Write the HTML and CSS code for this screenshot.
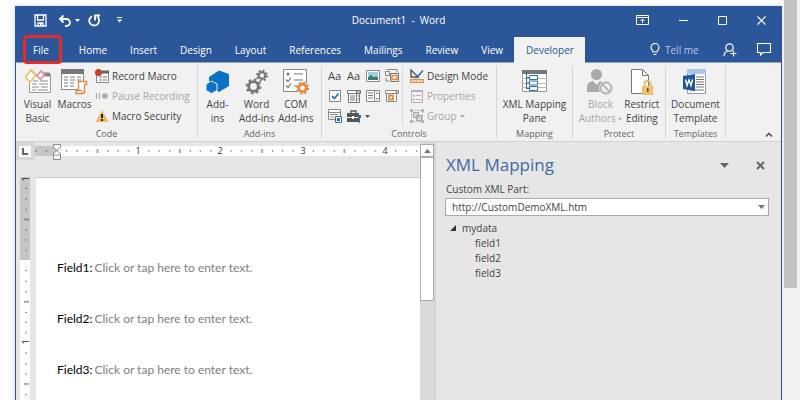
FILE: index.html
```
<!DOCTYPE html>
<html lang="en">
<head>
    <meta charset="UTF-8">
    <meta name="viewport" content="width=device-width, initial-scale=1.0">
    <title>Document1 - Word</title>
    <link rel="stylesheet" href="styles.css">
</head>
<body>
    <div class="window">
        <header class="titlebar">
            <div class="quick">
                <button aria-label="Save"><svg width="13" height="13"><path d="M1 1h11v11H1z M3.500 1v5h6V1 M4 12V9h5v3" fill="none" stroke="#fff" stroke-width="1.300"/><path d="M6 9h1.500v3H6z" fill="#fff"/></svg></button>
                <button class="undo" aria-label="Undo"><svg width="14" height="13"><path d="M2 5h6.500a3.500 3.500 0 0 1 0 7H7M5.500 1.500L2 5l3.500 3.500" fill="none" stroke="#fff" stroke-width="1.800"/></svg><svg width="5" height="3"><path d="M0 0h5L2.500 3z" fill="#fff"/></svg></button>
                <button aria-label="Redo"><svg width="13" height="13"><path d="M4 2.200A4.900 4.900 0 1 0 9.500 3M7 6.500V1.500H12" fill="none" stroke="#fff" stroke-width="1.800"/></svg></button>
                <button class="customize" aria-label="Customize toolbar"><svg width="5" height="6"><path d="M0 0h5v1H0zM0 2.500h5L2.500 5.500z" fill="#fff"/></svg></button>
            </div>
            <h1>Document1&nbsp; - &nbsp;Word</h1>
            <div class="controls">
                <button aria-label="Ribbon options"><svg width="13" height="10"><path d="M.5.5h12v9H.5zM.5 2.500h12M6.500 8V4M4.500 6l2-2 2 2" fill="none" stroke="#fff"/></svg></button>
                <button aria-label="Minimize"><svg width="9" height="9"><path d="M0 4.500h9" stroke="#fff"/></svg></button>
                <button aria-label="Maximize"><svg width="9" height="9"><path d="M.5.5h8v8h-8z" fill="none" stroke="#fff"/></svg></button>
                <button aria-label="Close"><svg width="9" height="9"><path d="M.5.5l8 8M8.500.5l-8 8" stroke="#fff" stroke-width="1.100"/></svg></button>
            </div>
        </header>

        <nav class="tabs">
            <button class="file">File</button>
            <button>Home</button>
            <button>Insert</button>
            <button>Design</button>
            <button>Layout</button>
            <button>References</button>
            <button>Mailings</button>
            <button>Review</button>
            <button>View</button>
            <button class="active">Developer</button>
            <div class="tools">
                <label for="tell" aria-label="Search"><svg width="10" height="13"><path d="M3 9C3 7.500 1 6.500 1 4.400a4 4 0 0 1 8 0C9 6.500 7 7.500 7 9zM3.500 11.500h3" fill="none" stroke="#fff" stroke-width="1.100"/></svg></label>
                <input id="tell" type="text" placeholder="Tell me">
                <button aria-label="Share"><svg width="14" height="14"><circle cx="6.500" cy="4.500" r="3.700" fill="none" stroke="#fff" stroke-width="1.200"/><path d="M1 13c0-3 1.500-4.500 4-5M10.500 7.500v6M7.500 10.500h6" fill="none" stroke="#fff" stroke-width="1.200"/></svg></button>
                <button aria-label="Comments"><svg width="14" height="13"><path d="M.5.5h13v9H6L3.500 12V9.500h-3z" fill="none" stroke="#fff" stroke-width="1.100"/></svg></button>
            </div>
        </nav>

        <section class="ribbon">
            <div class="group code">
                <div class="items">
                    <button class="big">
                        <svg width="26" height="26"><path d="M4.500 5.500h21v18h-21z" fill="#fff" stroke="#999"/><path d="M17 3.500h8v4h-8z" fill="#888"/><path d="M8 12h5M15 12h8M7 15h5M14 15h9M7 18h7M16 18h7M7 21h4M13 21h10" stroke="#888"/><path d="M6 1l5 5-6 7-4.500-5z" fill="#fff" stroke="#e6c06d" stroke-width="1.800"/><path d="M16 2l3.500 3.500-4 5-3.500-3.500z" fill="#fff" stroke="#e297a6" stroke-width="1.800"/></svg>
                        <span>Visual<br>Basic</span>
                    </button>
                    <button class="big">
                        <svg width="27" height="26"><path d="M.5.5h22v20H.5z" fill="#fff" stroke="#8a8a8a"/><path d="M0 0h23v5H0z" fill="#777"/><path d="M3 8h4M9 8h5M16 8h4M3 11h4M9 11h5M16 11h4M3 14h4M9 14h4M3 17h4M9 17h4" stroke="#777"/><path d="M17.500 12.500h8v3h-2v7.500q0 1.500-2 1.500h-6.500v-3h2.500z" fill="#fff" stroke="#e08a45" stroke-width="1.400"/><path d="M17 21.500h4v3" fill="none" stroke="#e08a45"/></svg>
                        <span>Macros</span>
                    </button>
                    <div class="list">
                        <button><svg width="14" height="14"><path d="M1.500 3.500h12v10h-12z" fill="#fff" stroke="#888"/><path d="M7 1.500h7v3H7z" fill="#666"/><path d="M4 8h3M8 8h4M4 11h3M8 11h4" stroke="#777"/><circle cx="3.500" cy="3.500" r="3.500" fill="#c9402c"/></svg>Record Macro</button>
                        <button disabled><svg width="14" height="14"><path d="M1.500 4v6M4.500 4v6" stroke="#aaa" stroke-width="1.200"/><circle cx="10" cy="7" r="2.800" fill="#aaa"/></svg>Pause Recording</button>
                        <button><svg width="14" height="14"><path d="M7 1l6.500 12H.5z" fill="#efb95d"/><path d="M6 5h2v4H6zM6 10h2v2H6z" fill="#222"/></svg>Macro Security</button>
                    </div>
                </div>
                <h2>Code</h2>
            </div>

            <div class="group addins">
                <div class="items">
                    <button class="big">
                        <svg width="26" height="26"><path d="M14 1.500L24 5v12l-10 6-10-6V8z" fill="#0a72c7"/><path d="M6.500 12l5.500 3v6.500l-5.500 3-5.500-3V15z" fill="#0a72c7" stroke="#f1f1f1"/></svg>
                        <span>Add-<br>ins</span>
                    </button>
                    <button class="big">
                        <svg width="26" height="26" fill="none" stroke="#777"><circle cx="9.500" cy="17.500" r="4.800" stroke-width="2.800"/><circle cx="9.500" cy="17.500" r="6.900" stroke-width="2" stroke-dasharray="2.700 2.720"/><circle cx="18" cy="6.500" r="3.300" stroke-width="2.200"/><circle cx="18" cy="6.500" r="5.100" stroke-width="1.800" stroke-dasharray="2 2"/></svg>
                        <span>Word<br>Add-ins</span>
                    </button>
                    <button class="big">
                        <svg width="28" height="26"><path d="M1.500.5h23v22h-23z" fill="#fff" stroke="#888"/><circle cx="6" cy="5" r="1.500" fill="#777"/><path d="M12 5h9M12 11h9M12 17h3M4 10.500l2 2 3-4M4 16.500l2 2 3-4" fill="none" stroke="#777" stroke-width="1.200"/><circle cx="20.500" cy="19" r="6" fill="#f1f1f1"/><circle cx="20.500" cy="19" r="3.700" fill="none" stroke="#e08a45" stroke-width="2.600"/><circle cx="20.500" cy="19" r="5.600" fill="none" stroke="#e08a45" stroke-width="2" stroke-dasharray="2.200 2.200"/></svg>
                        <span>COM<br>Add-ins</span>
                    </button>
                </div>
                <h2>Add-ins</h2>
            </div>

            <div class="group ctrl">
                <div class="items">
                    <div class="palette">
                        <button class="text" aria-label="Rich text">Aa</button>
                        <button class="text" aria-label="Plain text">Aa</button>
                        <button aria-label="Picture"><svg width="14" height="12"><path d="M.5.5h13v11H.5z" fill="#fff" stroke="#888"/><path d="M2 2h10v4H2z" fill="#9fd0e8"/><path d="M2 7l3-2 3 2 2-1 2 1v3H2z" fill="#3b7d70"/></svg></button>
                        <button aria-label="Building block"><svg width="14" height="14"><path d="M1.500.5h9M.5 2.500h4v4h-4zM1 9v3h3M6 .5h6v3" fill="none" stroke="#888"/><path d="M5.500 4.500h8v8h-8z" fill="#fff" stroke="#777"/><path d="M7 6.500h5v4H7z" fill="none" stroke="#e08a45" stroke-width="1.500"/></svg></button>
                        <button aria-label="Check box"><svg width="12" height="12"><path d="M.5.5h11v11H.5z" fill="#fff" stroke="#888"/><path d="M3 6l2.500 2.500L9.500 3.500" fill="none" stroke="#2f6db5" stroke-width="1.800"/></svg></button>
                        <button aria-label="Combo box"><svg width="14" height="13"><path d="M.5.5h13v3H.5zM1.500 3.500h11v9h-11zM9.500.5v12" fill="#fff" stroke="#777"/><path d="M3 6h5M3 8h5M3 10h5M10 2h3M10.500 6h2M10.500 9h2" stroke="#777"/></svg></button>
                        <button aria-label="Drop-down list"><svg width="14" height="12"><path d="M.5.5h13v11H.5zM8.500.5v11" fill="#fff" stroke="#888"/><path d="M2 3h5M2 5.500h5M2 8h5M10 4l1-1.500L12.500 4M10 8l1 1.500L12.500 8" fill="none" stroke="#777"/></svg></button>
                        <button aria-label="Date picker"><svg width="14" height="12"><path d="M.5.5h13v3H.5zM1.500 3.500h10v8h-10z" fill="#fff" stroke="#888"/><path d="M4 5.500h4v4H4z" fill="none" stroke="#e08a45" stroke-width="1.800"/><path d="M10 1.500h3L11.500 3z" fill="#555"/></svg></button>
                        <button aria-label="Repeating section"><svg width="14" height="14"><path d="M.5.5h12v10H.5zM0 3.500h12M2 5.500h8M2 8h4" fill="#fff" stroke="#888"/><path d="M7.500 7.500h6v6h-6z" fill="#fff" stroke="#2f6db5"/><path d="M9 9h3v3H9z" fill="#2f6db5"/></svg></button>
                        <button class="legacy" aria-label="Legacy tools"><svg width="15" height="13"><path d="M4 3V1h5v2" fill="none" stroke="#555" stroke-width="1.300"/><path d="M0 3h12v4H0zM0 8h12v4H0z" fill="#555"/><path d="M5 6h2v3H5z" fill="#fff"/><path d="M11 5h3v3h-1v5h-1V8h-1z" fill="#2f6db5"/></svg><svg width="5" height="3"><path d="M0 0h5L2.500 3z" fill="#555"/></svg></button>
                    </div>
                    <div class="list">
                        <button><svg width="14" height="14"><path d="M1 1v7h7z" fill="none" stroke="#555" stroke-width="1.400"/><path d="M12.500 1L7 7l-2 3 3-1.500L13.500 2z" fill="#2f6db5"/><path d="M.7 10.700h12.600v2.600H.7z" fill="#fff" stroke="#e08a45" stroke-width="1.300"/><path d="M4 11v1.500M7 11v1.500M10 11v1.500" stroke="#e08a45"/></svg>Design Mode</button>
                        <button disabled><svg width="14" height="14"><path d="M1.500 1.500h11v12h-11z" fill="#f7f0f7" stroke="#b8adb8"/><path d="M1 1h12v2H1zM3 6h2v1.500H3zM6 6h5v1H6zM3 10h2v1.500H3zM6 10h5v1H6z" fill="#b8adb8"/></svg>Properties</button>
                        <button disabled><svg width="14" height="14"><path d="M1.500 1.500h11v11h-11z" fill="none" stroke="#b5b5b5" stroke-dasharray="2 1"/><path d="M3.500 3.500h5v5h-5zM6.500 6.500h5v5h-5z" fill="#ddd6dd" stroke="#a9a0a9"/><path d="M0 0h3v3H0zM11 0h3v3h-3zM0 11h3v3H0zM11 11h3v3h-3z" fill="#b5b5b5"/></svg>Group<svg width="5" height="3"><path d="M0 0h5L2.500 3z" fill="#aaa"/></svg></button>
                    </div>
                </div>
                <h2>Controls</h2>
            </div>

            <div class="group mapping">
                <div class="items">
                    <button class="big">
                        <svg width="25" height="26"><path d="M.5 1.500h24v21H.5z" fill="#fff" stroke="#999"/><path d="M0 1h25v4H0z" fill="#777"/><path d="M0 9.500h25M0 14.500h25M0 18.500h25" stroke="#bbb"/><path d="M4.500 3v17M4.500 8.500h3M4.500 14h3M4.500 19.500h3" fill="none" stroke="#2f6db5"/><path d="M7.500 6.500h8v4h-8zM7.500 12h8v4h-8zM7.500 17.500h8v4h-8z" fill="#fff" stroke="#2f6db5"/></svg>
                        <span>XML Mapping<br>Pane</span>
                    </button>
                </div>
                <h2>Mapping</h2>
            </div>

            <div class="group protect">
                <div class="items">
                    <button class="big" disabled>
                        <svg width="26" height="26"><circle cx="9.500" cy="5.500" r="5.500" fill="#aaa"/><path d="M0 23V18q0-5 6-6l3.500 4 3.500-4q5 1 5 6v5z" fill="#aaa"/><circle cx="19" cy="19" r="7" fill="#f1f1f1"/><circle cx="19" cy="19" r="5.500" fill="none" stroke="#b5b5b5" stroke-width="2"/><path d="M15 15l8 8" stroke="#b5b5b5" stroke-width="2"/></svg>
                        <span>Block<br>Authors <svg class="drop" width="4" height="3"><path d="M0 0h4L2 2.500z" fill="#aaa"/></svg></span>
                    </button>
                    <button class="big">
                        <svg width="24" height="26"><path d="M1.500.5h11l6 6v18h-17z" fill="#fff" stroke="#777"/><path d="M12.500.5v6h6" fill="none" stroke="#777"/><path d="M14.500 18v-3a3 3 0 0 1 6 0v3" fill="none" stroke="#eab765" stroke-width="1.800"/><path d="M12 17h11v9H12z" fill="#efc16f"/><path d="M17 19h1.500v4H17z" fill="#555"/></svg>
                        <span>Restrict<br>Editing</span>
                    </button>
                </div>
                <h2>Protect</h2>
            </div>

            <div class="group templates">
                <div class="items">
                    <button class="big">
                        <svg width="24" height="26"><path d="M4.500.5h18v24h-18z" fill="#fff" stroke="#8d9db5"/><path d="M4 0h19v5H4z" fill="#a9c6ea"/><path d="M13 8h8M13 10.500h8M13 13h8M13 15.500h8M13 18h8M7 21h14" stroke="#777"/><path d="M0 7l12-2v17L0 20z" fill="#1f559f"/><path d="M2.500 10.500l1.500 6 2-5.500 2 5.500 1.500-6" fill="none" stroke="#fff" stroke-width="1.400"/></svg>
                        <span>Document<br>Template</span>
                    </button>
                </div>
                <h2>Templates</h2>
            </div>
            <button class="collapse" aria-label="Collapse ribbon"><svg width="8" height="5"><path d="M1 4.500l3-3 3 3" fill="none" stroke="#555" stroke-width="1.600"/></svg></button>
        </section>

        <main class="work">
            <section class="editor">
                <div class="hruler">
                    <button class="tabstop" aria-label="Tab stop"><svg width="7" height="7"><path d="M1 0v6h5" fill="none" stroke="#666" stroke-width="2"/></svg></button>
                    <svg class="scale" width="100%" height="18">
                        <defs>
                            <!-- one inch: eighth dots and a half-inch bar -->
                            <pattern id="inch" x="21" y="0" width="82.300" height="18" patternUnits="userSpaceOnUse">
                                <path d="M10 9h1M20.500 9h1M31 9h1M51.500 9h1M61.500 9h1M72 9h1" stroke="#555" stroke-width="1.500"/>
                                <path d="M41.500 7v4" stroke="#555"/>
                            </pattern>
                        </defs>
                        <rect y="4" width="100%" height="10" fill="#fff"/>
                        <rect y="4" width="21" height="10" fill="#c6c6c6"/>
                        <rect width="100%" height="18" fill="url(#inch)"/>
                        <g class="nums"><text x="103" y="12">1</text><text x="185" y="12">2</text><text x="268" y="12">3</text><text x="350" y="12">4</text></g>
                        <path d="M18.500 2.500h7v3L22 8.500l3.500 3v1.500h-7v-1.500l3.500-3-3.500-3zM18.500 13v4.500h7V13" fill="#fff" stroke="#8a8a8a"/>
                    </svg>
                </div>
                <div class="canvas">
                    <div class="vruler">
                        <svg width="10" height="100%">
                            <defs>
                                <pattern id="vinch" x="0" y="1" width="10" height="82.300" patternUnits="userSpaceOnUse">
                                    <path d="M6 10v1M6 20.500v1M6 31v1M6 51.500v1M6 61.500v1M6 72v1" stroke="#555" stroke-width="1.500"/>
                                    <path d="M4 41.500h5" stroke="#555"/>
                                </pattern>
                            </defs>
                            <rect width="10" height="100%" fill="#fff"/>
                            <rect width="10" height="83" fill="#c6c6c6"/>
                            <rect width="10" height="100%" fill="url(#vinch)"/>
                            <g class="nums"><text transform="translate(9 2) rotate(-90)">1</text><text transform="translate(9 165) rotate(-90)">1</text></g>
                        </svg>
                    </div>
                    <form class="page">
                        <p><label for="field1">Field1:</label><input id="field1" type="text" placeholder="Click or tap here to enter text."></p>
                        <p><label for="field2">Field2:</label><input id="field2" type="text" placeholder="Click or tap here to enter text."></p>
                        <p><label for="field3">Field3:</label><input id="field3" type="text" placeholder="Click or tap here to enter text."></p>
                    </form>
                </div>
            </section>
            <div class="vscroll">
                <button aria-label="Scroll up"><svg width="7" height="4"><path d="M0 4h7L3.500 0z" fill="#777"/></svg></button>
                <div class="thumb"></div>
            </div>
            <aside class="pane">
                <div class="pane-head">
                    <h2>XML Mapping</h2>
                    <button aria-label="Pane options"><svg width="9" height="5"><path d="M0 0h9L4.500 5z" fill="#666"/></svg></button>
                    <button aria-label="Close pane"><svg width="9" height="9"><path d="M1 1l7 7M8 1L1 8" stroke="#666" stroke-width="2"/></svg></button>
                </div>
                <label for="part">Custom XML Part:</label>
                <div class="combo">
                    <select id="part"><option>http://CustomDemoXML.htm</option></select>
                    <svg width="7" height="4"><path d="M0 0h7L3.500 4z" fill="#777"/></svg>
                </div>
                <ul class="tree">
                    <li><svg width="6" height="6"><path d="M6 0v6H0z" fill="#333"/></svg>mydata
                        <ul>
                            <li>field1</li>
                            <li>field2</li>
                            <li>field3</li>
                        </ul>
                    </li>
                </ul>
            </aside>
        </main>
    </div>
    <div class="scrollbar"><div class="bar"></div></div>
</body>
</html>
```

FILE: styles.css
```
* {
    box-sizing: border-box;
}

body {
    display: flex;
    min-height: 100vh;
    margin: 0;
    padding-left: 15px;
    background: #fff;
    color: #444;
    font: 10px/14px "Open Sans", "Noto Sans", sans-serif;
}

h1, h2, p, ul {
    margin: 0;
    padding: 0;
    font-weight: normal;
    font-size: inherit;
}

svg {
    flex: none;
}

button, input, select {
    margin: 0;
    padding: 0;
    border: none;
    border-radius: 0;
    background: none;
    color: inherit;
    font: inherit;
}

button {
    display: flex;
    align-items: center;
    justify-content: center;
}

button:disabled {
    color: #a6a6a6;
}

.window {
    display: flex;
    flex: 1;
    flex-direction: column;
    min-width: 0;
    margin-top: 6px;
    border: solid #2b579a;
    border-width: 0 1px;
    background: #e6e6e6;
    box-shadow: 0 0 4px #ccc;
}

/* title bar */
.titlebar {
    display: grid;
    grid-template-columns: 1fr auto 1fr;
    align-items: center;
    height: 31px;
    padding-bottom: 3px;
    background: #2b579a;
    color: #fff;
}

.quick, .controls {
    display: flex;
    align-items: center;
}

.quick {
    gap: 8px;
    padding-left: 18px;
}

.undo {
    gap: 3px;
    margin-left: 3px;
}

.customize {
    margin-left: 8px;
}

.controls {
    gap: 30px;
    justify-content: flex-end;
    padding-right: 15px;
}

/* tabs */
.tabs {
    display: flex;
    height: 26px;
    padding-left: 5px;
    border-bottom: 1px solid #8ea4c8;
    background: #2b579a;
    color: #fff;
}

.tabs > button {
    height: 25px;
    padding: 0 11px 0 12px;
}

.tabs .active {
    height: 26px;
    background: #f1f1f1;
    color: #2b579a;
}

.tabs .file {
    position: relative;
    margin-right: 7px;
}

.file::after {
    content: "";
    position: absolute;
    inset: -2px -2px -2px 2px;
    border: 3px solid #e02b2b;
    border-radius: 4px;
}

.tools {
    display: flex;
    align-items: center;
    margin-left: auto;
    padding-right: 10px;
}

.tools label {
    display: flex;
    margin-right: 5px;
}

.tools input {
    width: 38px;
}

.tools input::placeholder {
    color: #b9c8e0;
    opacity: 1;
}

.tools button {
    margin-left: 20px;
}

/* ribbon */
.ribbon {
    display: flex;
    height: 79px;
    padding: 3px 0;
    border-bottom: 1px solid #d2d2d2;
    background: #f1f1f1;
}

.group {
    display: flex;
    flex: none;
    flex-direction: column;
    justify-content: space-between;
    border-right: 1px solid #d4d4d4;
}

.group h2 {
    height: 8px;
    color: #666;
    font-size: 9px;
    line-height: 8px;
    text-align: center;
}

.items {
    display: flex;
    justify-content: center;
}

.code {
    width: 182px;
}

.code .items, .ctrl .items {
    justify-content: flex-start;
    padding-left: 3px;
}

.addins {
    width: 124px;
}

.addins .items {
    gap: 2px;
    justify-content: flex-start;
    padding-left: 1px;
}

.ctrl {
    width: 175px;
}

.mapping {
    width: 76px;
}

.protect {
    width: 93px;
}

.templates {
    width: 60px;
}

.big {
    flex-direction: column;
    justify-content: flex-start;
    gap: 2px;
    min-width: 37px;
    padding: 3px 1px 0;
    white-space: nowrap;
}

.drop {
    vertical-align: middle;
}

.list button {
    gap: 3px;
    height: 20px;
    white-space: nowrap;
}

.code .list {
    padding-left: 2px;
}

.palette {
    display: grid;
    grid-template-columns: repeat(4, 19px);
    grid-auto-rows: 20px;
}

.palette .text {
    font-size: 11px;
}

.legacy {
    gap: 3px;
    width: 28px;
}

.ctrl .list {
    margin-left: 1px;
    padding-left: 7px;
    border-left: 1px solid #ddd;
}

.collapse {
    align-self: flex-end;
    height: 8px;
    margin-left: auto;
    padding-right: 8px;
}

/* document area */
.work {
    display: flex;
    flex: 1;
}

.editor {
    display: flex;
    flex: 1;
    flex-direction: column;
    min-width: 0;
}

.hruler {
    display: flex;
    height: 18px;
}

.tabstop {
    flex: none;
    width: 19px;
    border: solid #d8d8d8;
    border-width: 4px 4px 3px 3px;
    background: #fbfbfb;
}

.scale {
    flex: 1;
    min-width: 0;
}

.nums {
    fill: #333;
    font-size: 9px;
    text-anchor: middle;
}

.canvas {
    display: flex;
    flex: 1;
    padding-top: 17px;
}

.vruler {
    display: flex;
    flex: none;
    width: 20px;
    padding-left: 4px;
}

.page {
    flex: 1;
    min-width: 0;
    padding: 82px 20px 0 21px;
    border-top: 1px solid #c8c8c8;
    background: #fff;
    font: 12px/15px Lato, sans-serif;
}

.page p {
    display: flex;
    gap: 2px;
    margin-bottom: 36px;
    color: #000;
}

.page input {
    flex: 1;
    min-width: 0;
    height: 15px;
}

.page input::placeholder {
    color: #808080;
    opacity: 1;
}

.vscroll {
    flex: none;
    width: 14px;
    padding-top: 2px;
    background: #dadada;
}

.vscroll button, .thumb {
    width: 100%;
    border: 1px solid #ababab;
    background: #fff;
}

.vscroll button {
    height: 13px;
}

.thumb {
    height: 144px;
}

/* mapping pane */
.pane {
    flex: 0 0 347px;
    padding: 11px 12px 0 9px;
    border-left: 2px solid #d4d4d4;
}

.pane-head {
    display: flex;
    align-items: center;
    gap: 27px;
    height: 24px;
    padding-right: 4px;
}

.pane-head h2 {
    flex: 1;
    color: #44699f;
    font-size: 17px;
    line-height: 24px;
}

.pane-head h2, .pane > label {
    padding-left: 1px;
}

.pane > label {
    display: block;
    margin: 5px 0 2px;
}

.combo {
    display: flex;
    position: relative;
    height: 18px;
}

.combo select {
    flex: 1;
    appearance: none;
    padding-left: 6px;
    border: 1px solid #ababab;
    background: #fff;
}

.combo svg {
    position: absolute;
    top: 7px;
    right: 4px;
    pointer-events: none;
}

.tree {
    margin-top: 5px;
    padding-left: 5px;
    line-height: 15px;
    list-style: none;
}

.tree svg {
    margin: 0 6px 3px 0;
    vertical-align: middle;
}

.tree ul {
    padding-left: 25px;
    list-style: none;
}

/* outer page scrollbar */
.scrollbar {
    flex: none;
    width: 16px;
    margin-left: 2px;
    padding-right: 3px;
    background: #f1f1f1;
}

.bar {
    height: 72vh;
    background: #c1c1c1;
}
```
